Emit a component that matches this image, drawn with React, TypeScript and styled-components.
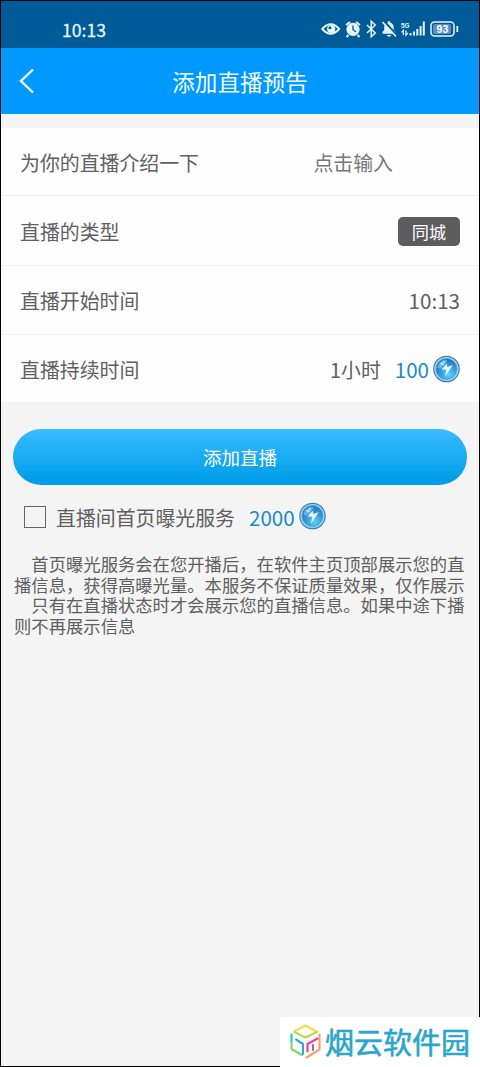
import React from "react";
import styled, { createGlobalStyle } from "styled-components";

const GlobalStyle = createGlobalStyle`
  * { box-sizing: border-box; }
  body { margin: 0; background: #f4f4f4; }
`;

const Page = styled.div`
  position: relative;
  width: 480px;
  height: 1067px;
  font-family: "Noto Sans CJK SC", sans-serif;
  line-height: 1;
  white-space: nowrap;
  overflow: hidden;
`;

const Screen = styled.main`
  display: flex;
  flex-direction: column;
  height: 100%;
  border: 1px solid #000;
  background: #f4f4f4;
  color: #606060;
  font-size: 19.9px;
`;

const StatusBar = styled.header`
  display: flex;
  justify-content: space-between;
  align-items: center;
  height: 47px;
  padding: 9px 20px 0 61px;
  background: #005b98;
  color: #e6f5ff;
`;

const Clock = styled.span`
  margin-top: 1px;
  font-size: 17.6px;
  -webkit-text-stroke: 0.3px currentColor;
`;

const StatusIcons = styled.svg`
  display: block;
  width: 138px;
  height: 22px;
`;

const NavBar = styled.nav`
  display: grid;
  grid-template-columns: 60px 1fr 60px;
  align-items: center;
  height: 66px;
  background: #0099ff;
  color: #f4fbff;
`;

const BackButton = styled.button`
  display: flex;
  padding: 0 0 0 17px;
  border: 0;
  background: none;
  color: inherit;
`;

const Title = styled.h1`
  margin: 2px 0 0;
  text-align: center;
  font-size: 22.6px;
  font-weight: 400;
`;

const Form = styled.section`
  margin-top: 14px;
  background: #fefefe;
`;

const Row = styled.div<{ $height: number }>`
  display: flex;
  align-items: center;
  justify-content: space-between;
  height: ${(p) => p.$height}px;
  padding: 2px 19px 0 19px;
  & + & { border-top: 1px solid #f0f0f0; }
`;

const Placeholder = styled.span`
  margin-right: 67px;
  color: #777;
`;

const Tag = styled.span`
  display: flex;
  align-items: center;
  justify-content: center;
  width: 62px;
  height: 29px;
  border-radius: 5px;
  background: #5d5d5d;
  color: #fff;
  font-size: 17.2px;
`;

const Time = styled.span`
  margin-top: -1px;
  font-size: 20.6px;
`;

const Cost = styled.span`
  display: flex;
  align-items: center;
  gap: 14px;
`;

const Price = styled.span`
  display: flex;
  align-items: center;
  gap: 4px;
  color: #168bd0;
  font-size: 20.5px;
`;

const CoinIcon = styled.svg`
  width: 27px;
  height: 28px;
  margin-bottom: 2px;
`;

const SubmitButton = styled.button`
  height: 56px;
  margin: 27px 12px 0;
  padding: 1px 0 0;
  border: 0;
  border-radius: 28px;
  background: linear-gradient(#3bbcff, #009ee9 90%);
  color: #fff;
  font: 400 18.5px/1 "Noto Sans CJK SC", sans-serif;
`;

const Option = styled.label`
  display: flex;
  align-items: center;
  height: 28px;
  margin: 18px 0 0 23px;
`;

const Box = styled.span`
  width: 22px;
  height: 22px;
  margin-right: 10px;
  border: 1px solid #666;
`;

const OptionText = styled.span`
  margin: 2px 14px 0 0;
`;

const Notes = styled.div`
  margin: 23px 0 0 13px;
  font-size: 17.33px;
  line-height: 20.5px;
`;

const Note = styled.p`
  margin: 0;
  text-indent: 1em;
`;

const Watermark = styled.aside`
  position: absolute;
  right: 0;
  bottom: 0;
  display: flex;
  align-items: center;
  gap: 4px;
  width: 200px;
  height: 50px;
  padding: 0 0 1px 10px;
  background: #fff;
  color: #2aa5cb;
  font-size: 29px;
  -webkit-text-stroke: 0.6px currentColor;
`;

function Coin() {
  return (
    <CoinIcon viewBox="0 0 27 28">
      <defs>
        <radialGradient id="coinFace" cx=".6" cy=".75" r=".7">
          <stop offset="0" stopColor="#62d2f8" />
          <stop offset=".5" stopColor="#3a9fdf" />
          <stop offset="1" stopColor="#2474bd" />
        </radialGradient>
      </defs>
      <circle cx="13.5" cy="14" r="12.7" fill="#9fe0f6" stroke="#457fa6" strokeWidth="1.2" />
      <circle cx="13.5" cy="14" r="10.6" fill="url(#coinFace)" stroke="#4aa8dc" strokeWidth=".8" />
      <path d="M4.5 13q0-6 7-8.5l3 1-3 5-4 3z" fill="#9de4fa" opacity=".5" />
      <path d="M8.5 14.6L14 8.5l.1 3.6 5.6-1.9L12 21.8l1.3-7.1z" fill="#e2faff" />
      <path d="M7.5 8.5l3 .8M10 6.5l1.4.8" stroke="#e1fbff" strokeWidth="1.4" />
    </CoinIcon>
  );
}

function SystemIcons() {
  return (
    <StatusIcons viewBox="0 0 138 22" fill="none" stroke="#e6f5ff">
      <path d="M1.2 11Q9.7 1.5 18.2 11Q9.7 20.5 1.2 11Z" strokeWidth="1.9" />
      <circle cx="10.2" cy="11" r="4.1" fill="#e6f5ff" stroke="none" />
      <circle cx="8.9" cy="9.7" r="1.5" fill="#005b98" stroke="none" />
      <circle cx="32" cy="11.4" r="6.6" fill="#e6f5ff" stroke="none" />
      <path d="M25 7l4-3M35 4l4 3M27.5 17l-2 2M36.5 17l2 2" strokeWidth="1.9" />
      <path d="M32 7.5v4.2l3 2" stroke="#005b98" strokeWidth="1.3" />
      <path d="M46 7l8.2 8-4 3.7V3.3l4 3.7-8.2 8" strokeWidth="1.5" />
      <path d="M61.5 15.8V14l1.7-2V9q.2-4 4-4.4V3h1.6v1.6q3.6.6 3.8 4.4v3l1.9 2v1.8z" fill="#e6f5ff" stroke="none" />
      <path d="M65.5 17h5q-2.5 3.5-5 0z" fill="#e6f5ff" stroke="none" />
      <path d="M63 3l13.5 15" stroke="#005b98" strokeWidth="2" />
      <path d="M61.5 4l13.5 14.5" strokeWidth="1.6" />
      <text x="80" y="9.5" fill="#e6f5ff" stroke="none" fontFamily="Liberation Sans, sans-serif" fontSize="8" fontWeight="700" textLength="8.5" lengthAdjust="spacingAndGlyphs">5G</text>
      <path d="M82.4 17v-4.6l-1.8 2M85 12.4V17l1.8-2" strokeWidth="1.3" />
      <path d="M89.5 17.5V15M93 17.5v-4M96.3 17.5V11M99.6 17.5V8M102.8 17.5V3.5" strokeWidth="2" />
      <rect x="110" y="4" width="23" height="14" rx="3.5" strokeWidth="1.5" />
      <rect x="112" y="6" width="18" height="10" rx="1.5" fill="#5b8fbd" stroke="none" />
      <path d="M136.3 8v6" strokeWidth="1.8" />
      <text x="121.4" y="14.7" textAnchor="middle" fill="#fff" stroke="none" fontFamily="Liberation Sans, sans-serif" fontSize="10.5" fontWeight="700">93</text>
    </StatusIcons>
  );
}

function CubeLogo() {
  return (
    <svg width="31" height="35" viewBox="0 0 31 35" fill="none" strokeWidth="2.1" strokeLinecap="round" strokeLinejoin="round">
      <path d="M4.5 7L15.5 1.5L27.5 8" stroke="#f4dc4e" />
      <path d="M4.5 8L15.5 13.5L27 8" stroke="#b6d957" />
      <path d="M1.5 10.5V25l10.5 6" stroke="#7fd66f" />
      <path d="M1.5 10.5V17" stroke="#43cbd8" />
      <path d="M6 15.5l7 4.5V30" stroke="#29aac8" />
      <path d="M29.5 10.5V25.5L16.5 33.5" stroke="#f4a066" />
      <path d="M17.5 27.5V20L27.5 14.5" stroke="#e64090" />
      <path d="M23 21v5" stroke="#9c61bb" />
    </svg>
  );
}

export default function App() {
  return (
    <>
      <GlobalStyle />
      <Page>
        <Screen>
          <StatusBar>
            <Clock>10:13</Clock>
            <SystemIcons />
          </StatusBar>
          <NavBar>
            <BackButton aria-label="返回">
              <svg width="18" height="28" viewBox="0 0 18 28" fill="none" stroke="currentColor" strokeWidth="2.4">
                <path d="M15 2.5L3 14L15 25.5" />
              </svg>
            </BackButton>
            <Title>添加直播预告</Title>
          </NavBar>
          <Form>
            <Row $height={67}>
              <span>为你的直播介绍一下</span>
              <Placeholder>点击输入</Placeholder>
            </Row>
            <Row $height={70}>
              <span>直播的类型</span>
              <Tag>同城</Tag>
            </Row>
            <Row $height={69}>
              <span>直播开始时间</span>
              <Time>10:13</Time>
            </Row>
            <Row $height={68}>
              <span>直播持续时间</span>
              <Cost>
                <span>1小时</span>
                <Price>100<Coin /></Price>
              </Cost>
            </Row>
          </Form>
          <SubmitButton>添加直播</SubmitButton>
          <Option>
            <Box />
            <OptionText>直播间首页曝光服务</OptionText>
            <Price>2000<Coin /></Price>
          </Option>
          <Notes>
            <Note>
              首页曝光服务会在您开播后，在软件主页顶部展示您的直<br />
              播信息，获得高曝光量。本服务不保证质量效果，仅作展示
            </Note>
            <Note>
              只有在直播状态时才会展示您的直播信息。如果中途下播<br />
              则不再展示信息
            </Note>
          </Notes>
        </Screen>
        <Watermark>
          <CubeLogo />
          <span>烟云软件园</span>
        </Watermark>
      </Page>
    </>
  );
}
